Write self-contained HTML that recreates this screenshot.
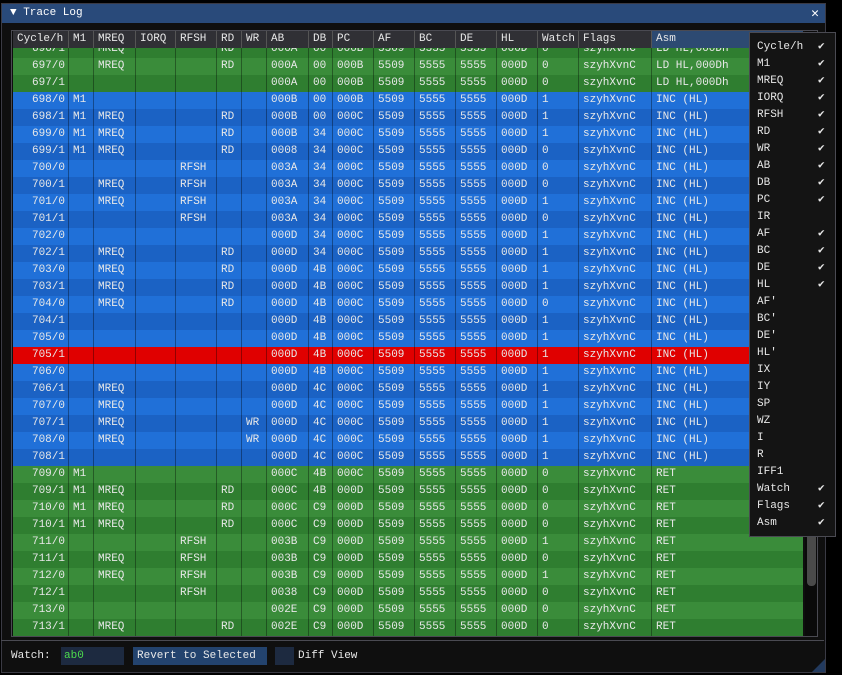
<!DOCTYPE html>
<html><head><meta charset="utf-8"><style>
*{margin:0;padding:0;box-sizing:border-box}
body{width:842px;height:675px;background:#000;overflow:hidden;font-family:"Liberation Mono","DejaVu Sans Mono",monospace;font-size:11px;color:#e8e8e8;position:relative}
.win{position:absolute;left:1px;top:3px;width:825px;height:670px;background:#0f0f0f;border:1px solid #3a3a44}
.title{position:absolute;left:0;top:0;width:823px;height:19px;background:#294a7a;color:#fff;font-size:11px;line-height:19px;padding-left:8px}
.close{position:absolute;right:6px;top:0;font-size:13px;color:#fff}
.tbl{position:absolute;left:11px;top:30px;width:807px;height:607px;border:1px solid #4a4a52;overflow:hidden;background:#0f0f0f}
.rows{position:absolute;left:1px;top:10px}
.r{display:flex;height:17px;line-height:17px;white-space:pre}
.r div{padding-left:4px;border-left:1px solid rgba(0,0,0,.35);overflow:hidden}
.r div:first-child{text-align:right;padding-right:3px;border-left:none}
.g0{background:#3a8c3a}.g1{background:#2f7e30}
.b0{background:#2070d8}.b1{background:#1b62c4}
.rd{background:#e00000}
.hdr{position:absolute;left:1px;top:0;height:17px;background:#303035}
.hdr div{border-left:1px solid #555;text-align:left!important;padding-left:4px!important}
.hdr div:first-child{border-left:none}
.sb{position:absolute;left:793px;top:0;width:13px;height:605px;background:#0a0a0a}
.grab{position:absolute;left:2px;top:470px;width:9px;height:85px;background:#4a4a4a;border-radius:4px}
.pop{position:absolute;left:749px;top:32px;width:87px;height:505px;background:#141414;border:1px solid #4a4a52}
.pop div{height:17px;line-height:17px;padding-left:7px;position:relative}
.pop span{position:absolute;left:68px;top:0}
.bot{position:absolute;left:1px;top:640px;width:823px;height:1px;background:#4a4a52}
.lbl{position:absolute;top:649px;line-height:14px}
</style></head><body>
<div class="win">
<div class="title">▼ Trace Log<span class="close">✕</span></div>
</div>
<div class="tbl">
<div class="rows">
<div class="r g1"><div style="width:55px">696/1</div><div style="width:25px"></div><div style="width:42px">MREQ</div><div style="width:40px"></div><div style="width:41px"></div><div style="width:25px">RD</div><div style="width:25px"></div><div style="width:42px">000A</div><div style="width:24px">00</div><div style="width:41px">000B</div><div style="width:41px">5509</div><div style="width:41px">5555</div><div style="width:41px">5555</div><div style="width:41px">000D</div><div style="width:41px">0</div><div style="width:73px">szyhXvnC</div><div style="width:152px">LD HL,000Dh</div></div>
<div class="r g0"><div style="width:55px">697/0</div><div style="width:25px"></div><div style="width:42px">MREQ</div><div style="width:40px"></div><div style="width:41px"></div><div style="width:25px">RD</div><div style="width:25px"></div><div style="width:42px">000A</div><div style="width:24px">00</div><div style="width:41px">000B</div><div style="width:41px">5509</div><div style="width:41px">5555</div><div style="width:41px">5555</div><div style="width:41px">000D</div><div style="width:41px">0</div><div style="width:73px">szyhXvnC</div><div style="width:152px">LD HL,000Dh</div></div>
<div class="r g1"><div style="width:55px">697/1</div><div style="width:25px"></div><div style="width:42px"></div><div style="width:40px"></div><div style="width:41px"></div><div style="width:25px"></div><div style="width:25px"></div><div style="width:42px">000A</div><div style="width:24px">00</div><div style="width:41px">000B</div><div style="width:41px">5509</div><div style="width:41px">5555</div><div style="width:41px">5555</div><div style="width:41px">000D</div><div style="width:41px">0</div><div style="width:73px">szyhXvnC</div><div style="width:152px">LD HL,000Dh</div></div>
<div class="r b0"><div style="width:55px">698/0</div><div style="width:25px">M1</div><div style="width:42px"></div><div style="width:40px"></div><div style="width:41px"></div><div style="width:25px"></div><div style="width:25px"></div><div style="width:42px">000B</div><div style="width:24px">00</div><div style="width:41px">000B</div><div style="width:41px">5509</div><div style="width:41px">5555</div><div style="width:41px">5555</div><div style="width:41px">000D</div><div style="width:41px">1</div><div style="width:73px">szyhXvnC</div><div style="width:152px">INC (HL)</div></div>
<div class="r b1"><div style="width:55px">698/1</div><div style="width:25px">M1</div><div style="width:42px">MREQ</div><div style="width:40px"></div><div style="width:41px"></div><div style="width:25px">RD</div><div style="width:25px"></div><div style="width:42px">000B</div><div style="width:24px">00</div><div style="width:41px">000C</div><div style="width:41px">5509</div><div style="width:41px">5555</div><div style="width:41px">5555</div><div style="width:41px">000D</div><div style="width:41px">1</div><div style="width:73px">szyhXvnC</div><div style="width:152px">INC (HL)</div></div>
<div class="r b0"><div style="width:55px">699/0</div><div style="width:25px">M1</div><div style="width:42px">MREQ</div><div style="width:40px"></div><div style="width:41px"></div><div style="width:25px">RD</div><div style="width:25px"></div><div style="width:42px">000B</div><div style="width:24px">34</div><div style="width:41px">000C</div><div style="width:41px">5509</div><div style="width:41px">5555</div><div style="width:41px">5555</div><div style="width:41px">000D</div><div style="width:41px">1</div><div style="width:73px">szyhXvnC</div><div style="width:152px">INC (HL)</div></div>
<div class="r b1"><div style="width:55px">699/1</div><div style="width:25px">M1</div><div style="width:42px">MREQ</div><div style="width:40px"></div><div style="width:41px"></div><div style="width:25px">RD</div><div style="width:25px"></div><div style="width:42px">0008</div><div style="width:24px">34</div><div style="width:41px">000C</div><div style="width:41px">5509</div><div style="width:41px">5555</div><div style="width:41px">5555</div><div style="width:41px">000D</div><div style="width:41px">0</div><div style="width:73px">szyhXvnC</div><div style="width:152px">INC (HL)</div></div>
<div class="r b0"><div style="width:55px">700/0</div><div style="width:25px"></div><div style="width:42px"></div><div style="width:40px"></div><div style="width:41px">RFSH</div><div style="width:25px"></div><div style="width:25px"></div><div style="width:42px">003A</div><div style="width:24px">34</div><div style="width:41px">000C</div><div style="width:41px">5509</div><div style="width:41px">5555</div><div style="width:41px">5555</div><div style="width:41px">000D</div><div style="width:41px">0</div><div style="width:73px">szyhXvnC</div><div style="width:152px">INC (HL)</div></div>
<div class="r b1"><div style="width:55px">700/1</div><div style="width:25px"></div><div style="width:42px">MREQ</div><div style="width:40px"></div><div style="width:41px">RFSH</div><div style="width:25px"></div><div style="width:25px"></div><div style="width:42px">003A</div><div style="width:24px">34</div><div style="width:41px">000C</div><div style="width:41px">5509</div><div style="width:41px">5555</div><div style="width:41px">5555</div><div style="width:41px">000D</div><div style="width:41px">0</div><div style="width:73px">szyhXvnC</div><div style="width:152px">INC (HL)</div></div>
<div class="r b0"><div style="width:55px">701/0</div><div style="width:25px"></div><div style="width:42px">MREQ</div><div style="width:40px"></div><div style="width:41px">RFSH</div><div style="width:25px"></div><div style="width:25px"></div><div style="width:42px">003A</div><div style="width:24px">34</div><div style="width:41px">000C</div><div style="width:41px">5509</div><div style="width:41px">5555</div><div style="width:41px">5555</div><div style="width:41px">000D</div><div style="width:41px">1</div><div style="width:73px">szyhXvnC</div><div style="width:152px">INC (HL)</div></div>
<div class="r b1"><div style="width:55px">701/1</div><div style="width:25px"></div><div style="width:42px"></div><div style="width:40px"></div><div style="width:41px">RFSH</div><div style="width:25px"></div><div style="width:25px"></div><div style="width:42px">003A</div><div style="width:24px">34</div><div style="width:41px">000C</div><div style="width:41px">5509</div><div style="width:41px">5555</div><div style="width:41px">5555</div><div style="width:41px">000D</div><div style="width:41px">0</div><div style="width:73px">szyhXvnC</div><div style="width:152px">INC (HL)</div></div>
<div class="r b0"><div style="width:55px">702/0</div><div style="width:25px"></div><div style="width:42px"></div><div style="width:40px"></div><div style="width:41px"></div><div style="width:25px"></div><div style="width:25px"></div><div style="width:42px">000D</div><div style="width:24px">34</div><div style="width:41px">000C</div><div style="width:41px">5509</div><div style="width:41px">5555</div><div style="width:41px">5555</div><div style="width:41px">000D</div><div style="width:41px">1</div><div style="width:73px">szyhXvnC</div><div style="width:152px">INC (HL)</div></div>
<div class="r b1"><div style="width:55px">702/1</div><div style="width:25px"></div><div style="width:42px">MREQ</div><div style="width:40px"></div><div style="width:41px"></div><div style="width:25px">RD</div><div style="width:25px"></div><div style="width:42px">000D</div><div style="width:24px">34</div><div style="width:41px">000C</div><div style="width:41px">5509</div><div style="width:41px">5555</div><div style="width:41px">5555</div><div style="width:41px">000D</div><div style="width:41px">1</div><div style="width:73px">szyhXvnC</div><div style="width:152px">INC (HL)</div></div>
<div class="r b0"><div style="width:55px">703/0</div><div style="width:25px"></div><div style="width:42px">MREQ</div><div style="width:40px"></div><div style="width:41px"></div><div style="width:25px">RD</div><div style="width:25px"></div><div style="width:42px">000D</div><div style="width:24px">4B</div><div style="width:41px">000C</div><div style="width:41px">5509</div><div style="width:41px">5555</div><div style="width:41px">5555</div><div style="width:41px">000D</div><div style="width:41px">1</div><div style="width:73px">szyhXvnC</div><div style="width:152px">INC (HL)</div></div>
<div class="r b1"><div style="width:55px">703/1</div><div style="width:25px"></div><div style="width:42px">MREQ</div><div style="width:40px"></div><div style="width:41px"></div><div style="width:25px">RD</div><div style="width:25px"></div><div style="width:42px">000D</div><div style="width:24px">4B</div><div style="width:41px">000C</div><div style="width:41px">5509</div><div style="width:41px">5555</div><div style="width:41px">5555</div><div style="width:41px">000D</div><div style="width:41px">1</div><div style="width:73px">szyhXvnC</div><div style="width:152px">INC (HL)</div></div>
<div class="r b0"><div style="width:55px">704/0</div><div style="width:25px"></div><div style="width:42px">MREQ</div><div style="width:40px"></div><div style="width:41px"></div><div style="width:25px">RD</div><div style="width:25px"></div><div style="width:42px">000D</div><div style="width:24px">4B</div><div style="width:41px">000C</div><div style="width:41px">5509</div><div style="width:41px">5555</div><div style="width:41px">5555</div><div style="width:41px">000D</div><div style="width:41px">0</div><div style="width:73px">szyhXvnC</div><div style="width:152px">INC (HL)</div></div>
<div class="r b1"><div style="width:55px">704/1</div><div style="width:25px"></div><div style="width:42px"></div><div style="width:40px"></div><div style="width:41px"></div><div style="width:25px"></div><div style="width:25px"></div><div style="width:42px">000D</div><div style="width:24px">4B</div><div style="width:41px">000C</div><div style="width:41px">5509</div><div style="width:41px">5555</div><div style="width:41px">5555</div><div style="width:41px">000D</div><div style="width:41px">1</div><div style="width:73px">szyhXvnC</div><div style="width:152px">INC (HL)</div></div>
<div class="r b0"><div style="width:55px">705/0</div><div style="width:25px"></div><div style="width:42px"></div><div style="width:40px"></div><div style="width:41px"></div><div style="width:25px"></div><div style="width:25px"></div><div style="width:42px">000D</div><div style="width:24px">4B</div><div style="width:41px">000C</div><div style="width:41px">5509</div><div style="width:41px">5555</div><div style="width:41px">5555</div><div style="width:41px">000D</div><div style="width:41px">1</div><div style="width:73px">szyhXvnC</div><div style="width:152px">INC (HL)</div></div>
<div class="r rd"><div style="width:55px">705/1</div><div style="width:25px"></div><div style="width:42px"></div><div style="width:40px"></div><div style="width:41px"></div><div style="width:25px"></div><div style="width:25px"></div><div style="width:42px">000D</div><div style="width:24px">4B</div><div style="width:41px">000C</div><div style="width:41px">5509</div><div style="width:41px">5555</div><div style="width:41px">5555</div><div style="width:41px">000D</div><div style="width:41px">1</div><div style="width:73px">szyhXvnC</div><div style="width:152px">INC (HL)</div></div>
<div class="r b0"><div style="width:55px">706/0</div><div style="width:25px"></div><div style="width:42px"></div><div style="width:40px"></div><div style="width:41px"></div><div style="width:25px"></div><div style="width:25px"></div><div style="width:42px">000D</div><div style="width:24px">4B</div><div style="width:41px">000C</div><div style="width:41px">5509</div><div style="width:41px">5555</div><div style="width:41px">5555</div><div style="width:41px">000D</div><div style="width:41px">1</div><div style="width:73px">szyhXvnC</div><div style="width:152px">INC (HL)</div></div>
<div class="r b1"><div style="width:55px">706/1</div><div style="width:25px"></div><div style="width:42px">MREQ</div><div style="width:40px"></div><div style="width:41px"></div><div style="width:25px"></div><div style="width:25px"></div><div style="width:42px">000D</div><div style="width:24px">4C</div><div style="width:41px">000C</div><div style="width:41px">5509</div><div style="width:41px">5555</div><div style="width:41px">5555</div><div style="width:41px">000D</div><div style="width:41px">1</div><div style="width:73px">szyhXvnC</div><div style="width:152px">INC (HL)</div></div>
<div class="r b0"><div style="width:55px">707/0</div><div style="width:25px"></div><div style="width:42px">MREQ</div><div style="width:40px"></div><div style="width:41px"></div><div style="width:25px"></div><div style="width:25px"></div><div style="width:42px">000D</div><div style="width:24px">4C</div><div style="width:41px">000C</div><div style="width:41px">5509</div><div style="width:41px">5555</div><div style="width:41px">5555</div><div style="width:41px">000D</div><div style="width:41px">1</div><div style="width:73px">szyhXvnC</div><div style="width:152px">INC (HL)</div></div>
<div class="r b1"><div style="width:55px">707/1</div><div style="width:25px"></div><div style="width:42px">MREQ</div><div style="width:40px"></div><div style="width:41px"></div><div style="width:25px"></div><div style="width:25px">WR</div><div style="width:42px">000D</div><div style="width:24px">4C</div><div style="width:41px">000C</div><div style="width:41px">5509</div><div style="width:41px">5555</div><div style="width:41px">5555</div><div style="width:41px">000D</div><div style="width:41px">1</div><div style="width:73px">szyhXvnC</div><div style="width:152px">INC (HL)</div></div>
<div class="r b0"><div style="width:55px">708/0</div><div style="width:25px"></div><div style="width:42px">MREQ</div><div style="width:40px"></div><div style="width:41px"></div><div style="width:25px"></div><div style="width:25px">WR</div><div style="width:42px">000D</div><div style="width:24px">4C</div><div style="width:41px">000C</div><div style="width:41px">5509</div><div style="width:41px">5555</div><div style="width:41px">5555</div><div style="width:41px">000D</div><div style="width:41px">1</div><div style="width:73px">szyhXvnC</div><div style="width:152px">INC (HL)</div></div>
<div class="r b1"><div style="width:55px">708/1</div><div style="width:25px"></div><div style="width:42px"></div><div style="width:40px"></div><div style="width:41px"></div><div style="width:25px"></div><div style="width:25px"></div><div style="width:42px">000D</div><div style="width:24px">4C</div><div style="width:41px">000C</div><div style="width:41px">5509</div><div style="width:41px">5555</div><div style="width:41px">5555</div><div style="width:41px">000D</div><div style="width:41px">1</div><div style="width:73px">szyhXvnC</div><div style="width:152px">INC (HL)</div></div>
<div class="r g0"><div style="width:55px">709/0</div><div style="width:25px">M1</div><div style="width:42px"></div><div style="width:40px"></div><div style="width:41px"></div><div style="width:25px"></div><div style="width:25px"></div><div style="width:42px">000C</div><div style="width:24px">4B</div><div style="width:41px">000C</div><div style="width:41px">5509</div><div style="width:41px">5555</div><div style="width:41px">5555</div><div style="width:41px">000D</div><div style="width:41px">0</div><div style="width:73px">szyhXvnC</div><div style="width:152px">RET</div></div>
<div class="r g1"><div style="width:55px">709/1</div><div style="width:25px">M1</div><div style="width:42px">MREQ</div><div style="width:40px"></div><div style="width:41px"></div><div style="width:25px">RD</div><div style="width:25px"></div><div style="width:42px">000C</div><div style="width:24px">4B</div><div style="width:41px">000D</div><div style="width:41px">5509</div><div style="width:41px">5555</div><div style="width:41px">5555</div><div style="width:41px">000D</div><div style="width:41px">0</div><div style="width:73px">szyhXvnC</div><div style="width:152px">RET</div></div>
<div class="r g0"><div style="width:55px">710/0</div><div style="width:25px">M1</div><div style="width:42px">MREQ</div><div style="width:40px"></div><div style="width:41px"></div><div style="width:25px">RD</div><div style="width:25px"></div><div style="width:42px">000C</div><div style="width:24px">C9</div><div style="width:41px">000D</div><div style="width:41px">5509</div><div style="width:41px">5555</div><div style="width:41px">5555</div><div style="width:41px">000D</div><div style="width:41px">0</div><div style="width:73px">szyhXvnC</div><div style="width:152px">RET</div></div>
<div class="r g1"><div style="width:55px">710/1</div><div style="width:25px">M1</div><div style="width:42px">MREQ</div><div style="width:40px"></div><div style="width:41px"></div><div style="width:25px">RD</div><div style="width:25px"></div><div style="width:42px">000C</div><div style="width:24px">C9</div><div style="width:41px">000D</div><div style="width:41px">5509</div><div style="width:41px">5555</div><div style="width:41px">5555</div><div style="width:41px">000D</div><div style="width:41px">0</div><div style="width:73px">szyhXvnC</div><div style="width:152px">RET</div></div>
<div class="r g0"><div style="width:55px">711/0</div><div style="width:25px"></div><div style="width:42px"></div><div style="width:40px"></div><div style="width:41px">RFSH</div><div style="width:25px"></div><div style="width:25px"></div><div style="width:42px">003B</div><div style="width:24px">C9</div><div style="width:41px">000D</div><div style="width:41px">5509</div><div style="width:41px">5555</div><div style="width:41px">5555</div><div style="width:41px">000D</div><div style="width:41px">1</div><div style="width:73px">szyhXvnC</div><div style="width:152px">RET</div></div>
<div class="r g1"><div style="width:55px">711/1</div><div style="width:25px"></div><div style="width:42px">MREQ</div><div style="width:40px"></div><div style="width:41px">RFSH</div><div style="width:25px"></div><div style="width:25px"></div><div style="width:42px">003B</div><div style="width:24px">C9</div><div style="width:41px">000D</div><div style="width:41px">5509</div><div style="width:41px">5555</div><div style="width:41px">5555</div><div style="width:41px">000D</div><div style="width:41px">0</div><div style="width:73px">szyhXvnC</div><div style="width:152px">RET</div></div>
<div class="r g0"><div style="width:55px">712/0</div><div style="width:25px"></div><div style="width:42px">MREQ</div><div style="width:40px"></div><div style="width:41px">RFSH</div><div style="width:25px"></div><div style="width:25px"></div><div style="width:42px">003B</div><div style="width:24px">C9</div><div style="width:41px">000D</div><div style="width:41px">5509</div><div style="width:41px">5555</div><div style="width:41px">5555</div><div style="width:41px">000D</div><div style="width:41px">1</div><div style="width:73px">szyhXvnC</div><div style="width:152px">RET</div></div>
<div class="r g1"><div style="width:55px">712/1</div><div style="width:25px"></div><div style="width:42px"></div><div style="width:40px"></div><div style="width:41px">RFSH</div><div style="width:25px"></div><div style="width:25px"></div><div style="width:42px">0038</div><div style="width:24px">C9</div><div style="width:41px">000D</div><div style="width:41px">5509</div><div style="width:41px">5555</div><div style="width:41px">5555</div><div style="width:41px">000D</div><div style="width:41px">0</div><div style="width:73px">szyhXvnC</div><div style="width:152px">RET</div></div>
<div class="r g0"><div style="width:55px">713/0</div><div style="width:25px"></div><div style="width:42px"></div><div style="width:40px"></div><div style="width:41px"></div><div style="width:25px"></div><div style="width:25px"></div><div style="width:42px">002E</div><div style="width:24px">C9</div><div style="width:41px">000D</div><div style="width:41px">5509</div><div style="width:41px">5555</div><div style="width:41px">5555</div><div style="width:41px">000D</div><div style="width:41px">0</div><div style="width:73px">szyhXvnC</div><div style="width:152px">RET</div></div>
<div class="r g1"><div style="width:55px">713/1</div><div style="width:25px"></div><div style="width:42px">MREQ</div><div style="width:40px"></div><div style="width:41px"></div><div style="width:25px">RD</div><div style="width:25px"></div><div style="width:42px">002E</div><div style="width:24px">C9</div><div style="width:41px">000D</div><div style="width:41px">5509</div><div style="width:41px">5555</div><div style="width:41px">5555</div><div style="width:41px">000D</div><div style="width:41px">0</div><div style="width:73px">szyhXvnC</div><div style="width:152px">RET</div></div>
</div>
<div class="r hdr"><div style="width:55px">Cycle/h</div><div style="width:25px">M1</div><div style="width:42px">MREQ</div><div style="width:40px">IORQ</div><div style="width:41px">RFSH</div><div style="width:25px">RD</div><div style="width:25px">WR</div><div style="width:42px">AB</div><div style="width:24px">DB</div><div style="width:41px">PC</div><div style="width:41px">AF</div><div style="width:41px">BC</div><div style="width:41px">DE</div><div style="width:41px">HL</div><div style="width:41px">Watch</div><div style="width:73px">Flags</div><div style="width:152px;background:#2d4a72">Asm</div></div>
<div class="sb"><div class="grab"></div></div>
</div>
<div class="bot"></div>
<div class="lbl" style="left:11px">Watch:</div>
<div style="position:absolute;left:61px;top:647px;width:63px;height:18px;background:#1d2a40;color:#4ddc4d;line-height:18px;padding-left:3px">ab0</div>
<div style="position:absolute;left:133px;top:647px;width:134px;height:18px;background:#23436e;line-height:18px;padding-left:4px">Revert to Selected</div>
<div style="position:absolute;left:275px;top:647px;width:19px;height:18px;background:#1d2a40"></div>
<div class="lbl" style="left:298px">Diff View</div>
<div style="position:absolute;left:812px;top:659px;width:0;height:0;border-left:13px solid transparent;border-bottom:13px solid #223a5e"></div>
<div class="pop">
<div style="margin-top:6px">Cycle/h<span>✔</span></div><div>M1<span>✔</span></div><div>MREQ<span>✔</span></div><div>IORQ<span>✔</span></div><div>RFSH<span>✔</span></div><div>RD<span>✔</span></div><div>WR<span>✔</span></div><div>AB<span>✔</span></div><div>DB<span>✔</span></div><div>PC<span>✔</span></div><div>IR</div><div>AF<span>✔</span></div><div>BC<span>✔</span></div><div>DE<span>✔</span></div><div>HL<span>✔</span></div><div>AF'</div><div>BC'</div><div>DE'</div><div>HL'</div><div>IX</div><div>IY</div><div>SP</div><div>WZ</div><div>I</div><div>R</div><div>IFF1</div><div>Watch<span>✔</span></div><div>Flags<span>✔</span></div><div>Asm<span>✔</span></div>
</div>
</body></html>
